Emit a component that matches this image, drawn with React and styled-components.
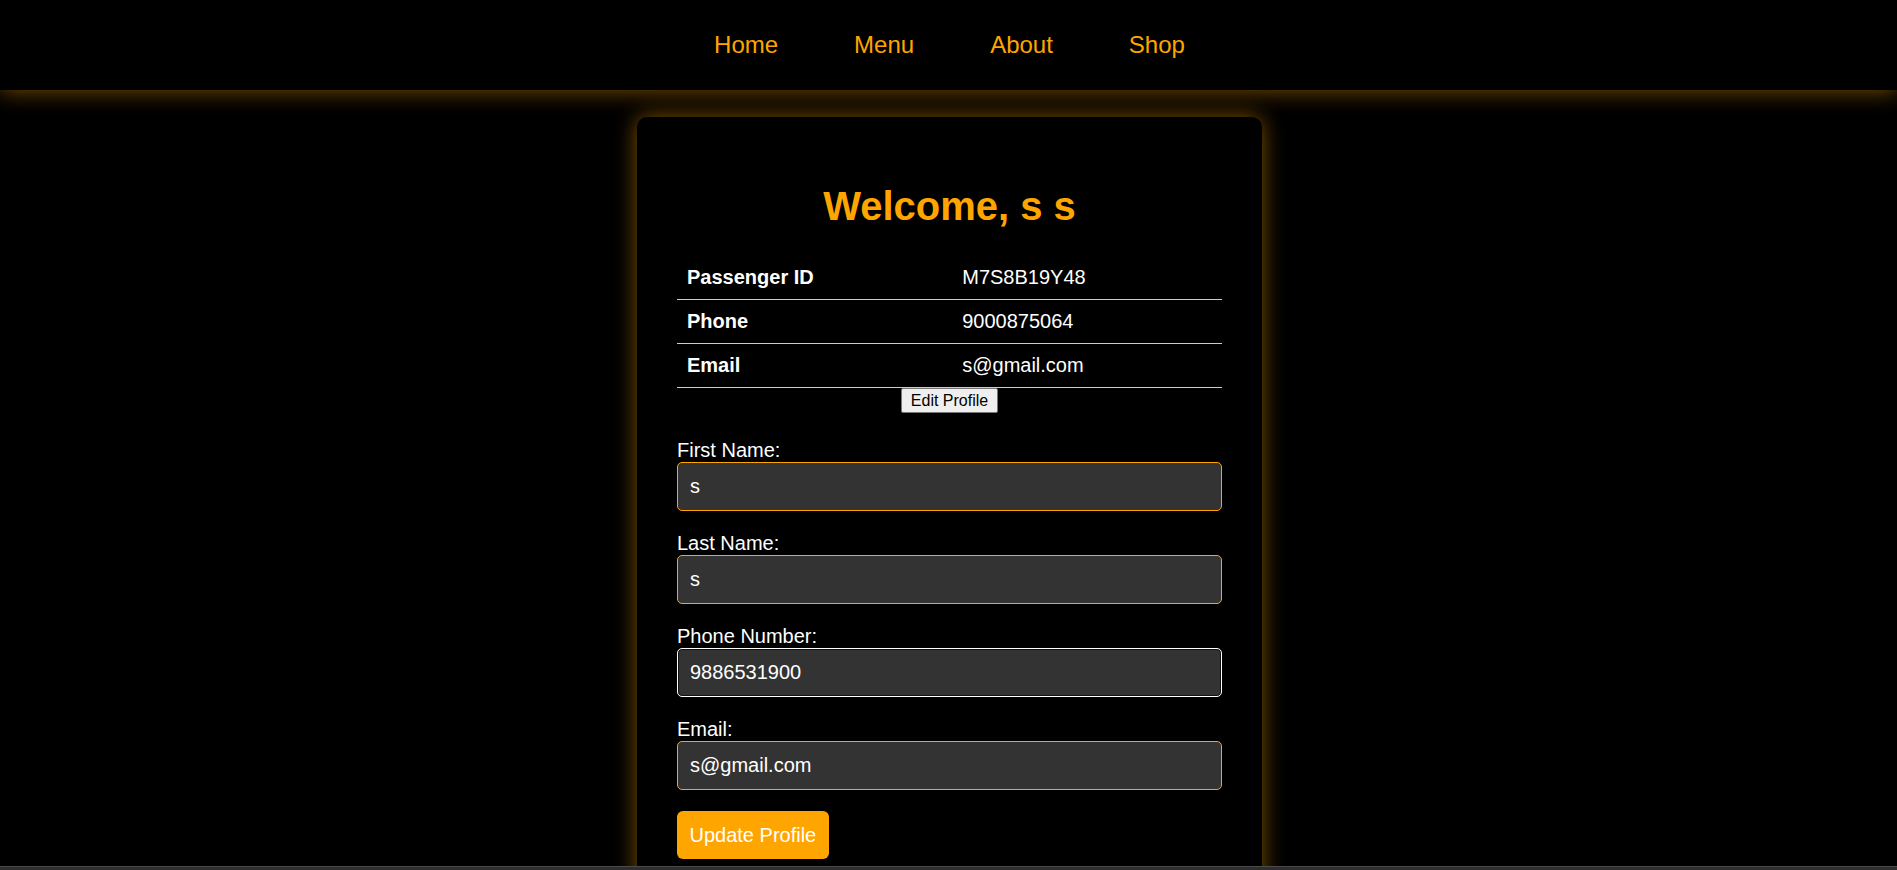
import React from 'react'
import styled, { createGlobalStyle } from 'styled-components'

const GlobalStyle = createGlobalStyle`
  html {
    scrollbar-width: none;
  }
  html::-webkit-scrollbar {
    display: none;
  }
  body {
    margin: 0;
    background-color: #000;
    color: #fff;
    font-family: "Liberation Sans", Arial, sans-serif;
  }
`

const Header = styled.header`
  height: 90px;
  display: flex;
  align-items: center;
  justify-content: center;
  padding-left: 2px;
  background-color: #000;
  box-shadow: 0 0 22px rgba(255, 165, 0, 0.5);
`

const NavList = styled.ul`
  display: flex;
  gap: 76px;
  list-style: none;
  margin: 0;
  padding: 0;
`

const NavLink = styled.a`
  color: #ffa500;
  font-size: 24px;
  text-decoration: none;
`

const Card = styled.main`
  width: 625px;
  box-sizing: border-box;
  margin: 27px auto 0;
  padding: 40px;
  position: relative;
  left: 1px;
  background-color: #000;
  border-radius: 10px;
  box-shadow: 0 0 22px rgba(255, 165, 0, 0.5);
`

const Title = styled.h1`
  margin: 27px 0;
  text-align: center;
  color: #ffa500;
  font-size: 40px;
  font-weight: bold;
`

const InfoTable = styled.table`
  width: 100%;
  border-collapse: collapse;
  font-size: 20px;
  color: #fff;
`

const Cell = styled.td`
  width: ${({ $label }) => ($label ? '50.5%' : '49.5%')};
  padding: 10px;
  line-height: 23px;
  border-bottom: 1px solid #ccc;
  font-weight: ${({ $label }) => ($label ? 'bold' : 'normal')};
`

const EditRow = styled.div`
  display: flex;
  justify-content: center;
`

const EditButton = styled.button`
  font-family: "Liberation Sans", Arial, sans-serif;
  font-size: 16px;
  line-height: 19px;
  padding: 2px 9px;
  color: #000;
  background-color: #efefef;
  border: 1px solid #767676;
  border-radius: 2px;
`

const Form = styled.form`
  margin-top: 26px;
`

const Field = styled.div`
  margin-bottom: 21px;
`

const Label = styled.label`
  display: block;
  font-size: 20px;
  line-height: 23px;
  color: #fff;
`

const Input = styled.input`
  display: block;
  width: 100%;
  box-sizing: border-box;
  padding: 12px;
  font-family: "Liberation Sans", Arial, sans-serif;
  font-size: 20px;
  line-height: 23px;
  color: #fff;
  background-color: #333;
  border: 1px solid ${({ $active }) => ($active ? '#fff' : '#ffa500')};
  box-shadow: ${({ $active }) => ($active ? 'inset 0 0 0 1px #111' : 'none')};
  border-radius: 5px;
  outline: none;
`

const UpdateButton = styled.button`
  font-family: "Liberation Sans", Arial, sans-serif;
  font-size: 20px;
  line-height: 23px;
  padding: 12.5px 12.5px;
  color: #fff;
  background-color: #ffa500;
  border: none;
  border-radius: 6px;
`

const FooterStrip = styled.footer`
  position: fixed;
  left: 0;
  right: 0;
  bottom: 0;
  height: 3px;
  background-color: #2e2e2e;
  border-top: 1px solid #4a4a4a;
`

const profile = [
  ['Passenger ID', 'M7S8B19Y48'],
  ['Phone', '9000875064'],
  ['Email', 's@gmail.com'],
]

const fields = [
  { id: 'first', label: 'First Name:', value: 's' },
  { id: 'last', label: 'Last Name:', value: 's' },
  { id: 'phone', label: 'Phone Number:', value: '9886531900', active: true },
  { id: 'email', label: 'Email:', value: 's@gmail.com' },
]

const App = () => {
  return (
    <React.Fragment>
      <GlobalStyle />
      <Header>
        <nav>
          <NavList>
            <li><NavLink href="#">Home</NavLink></li>
            <li><NavLink href="#">Menu</NavLink></li>
            <li><NavLink href="#">About</NavLink></li>
            <li><NavLink href="#">Shop</NavLink></li>
          </NavList>
        </nav>
      </Header>
      <Card>
        <Title>Welcome, s s</Title>
        <InfoTable>
          <tbody>
            {profile.map(([label, value]) => (
              <tr key={label}>
                <Cell $label>{label}</Cell>
                <Cell>{value}</Cell>
              </tr>
            ))}
          </tbody>
        </InfoTable>
        <EditRow>
          <EditButton type="button">Edit Profile</EditButton>
        </EditRow>
        <Form onSubmit={(e) => e.preventDefault()}>
          {fields.map((f) => (
            <Field key={f.id}>
              <Label htmlFor={f.id}>{f.label}</Label>
              <Input id={f.id} defaultValue={f.value} $active={f.active} />
            </Field>
          ))}
          <UpdateButton type="submit">Update Profile</UpdateButton>
        </Form>
      </Card>
      <FooterStrip />
    </React.Fragment>
  )
}

export default App
